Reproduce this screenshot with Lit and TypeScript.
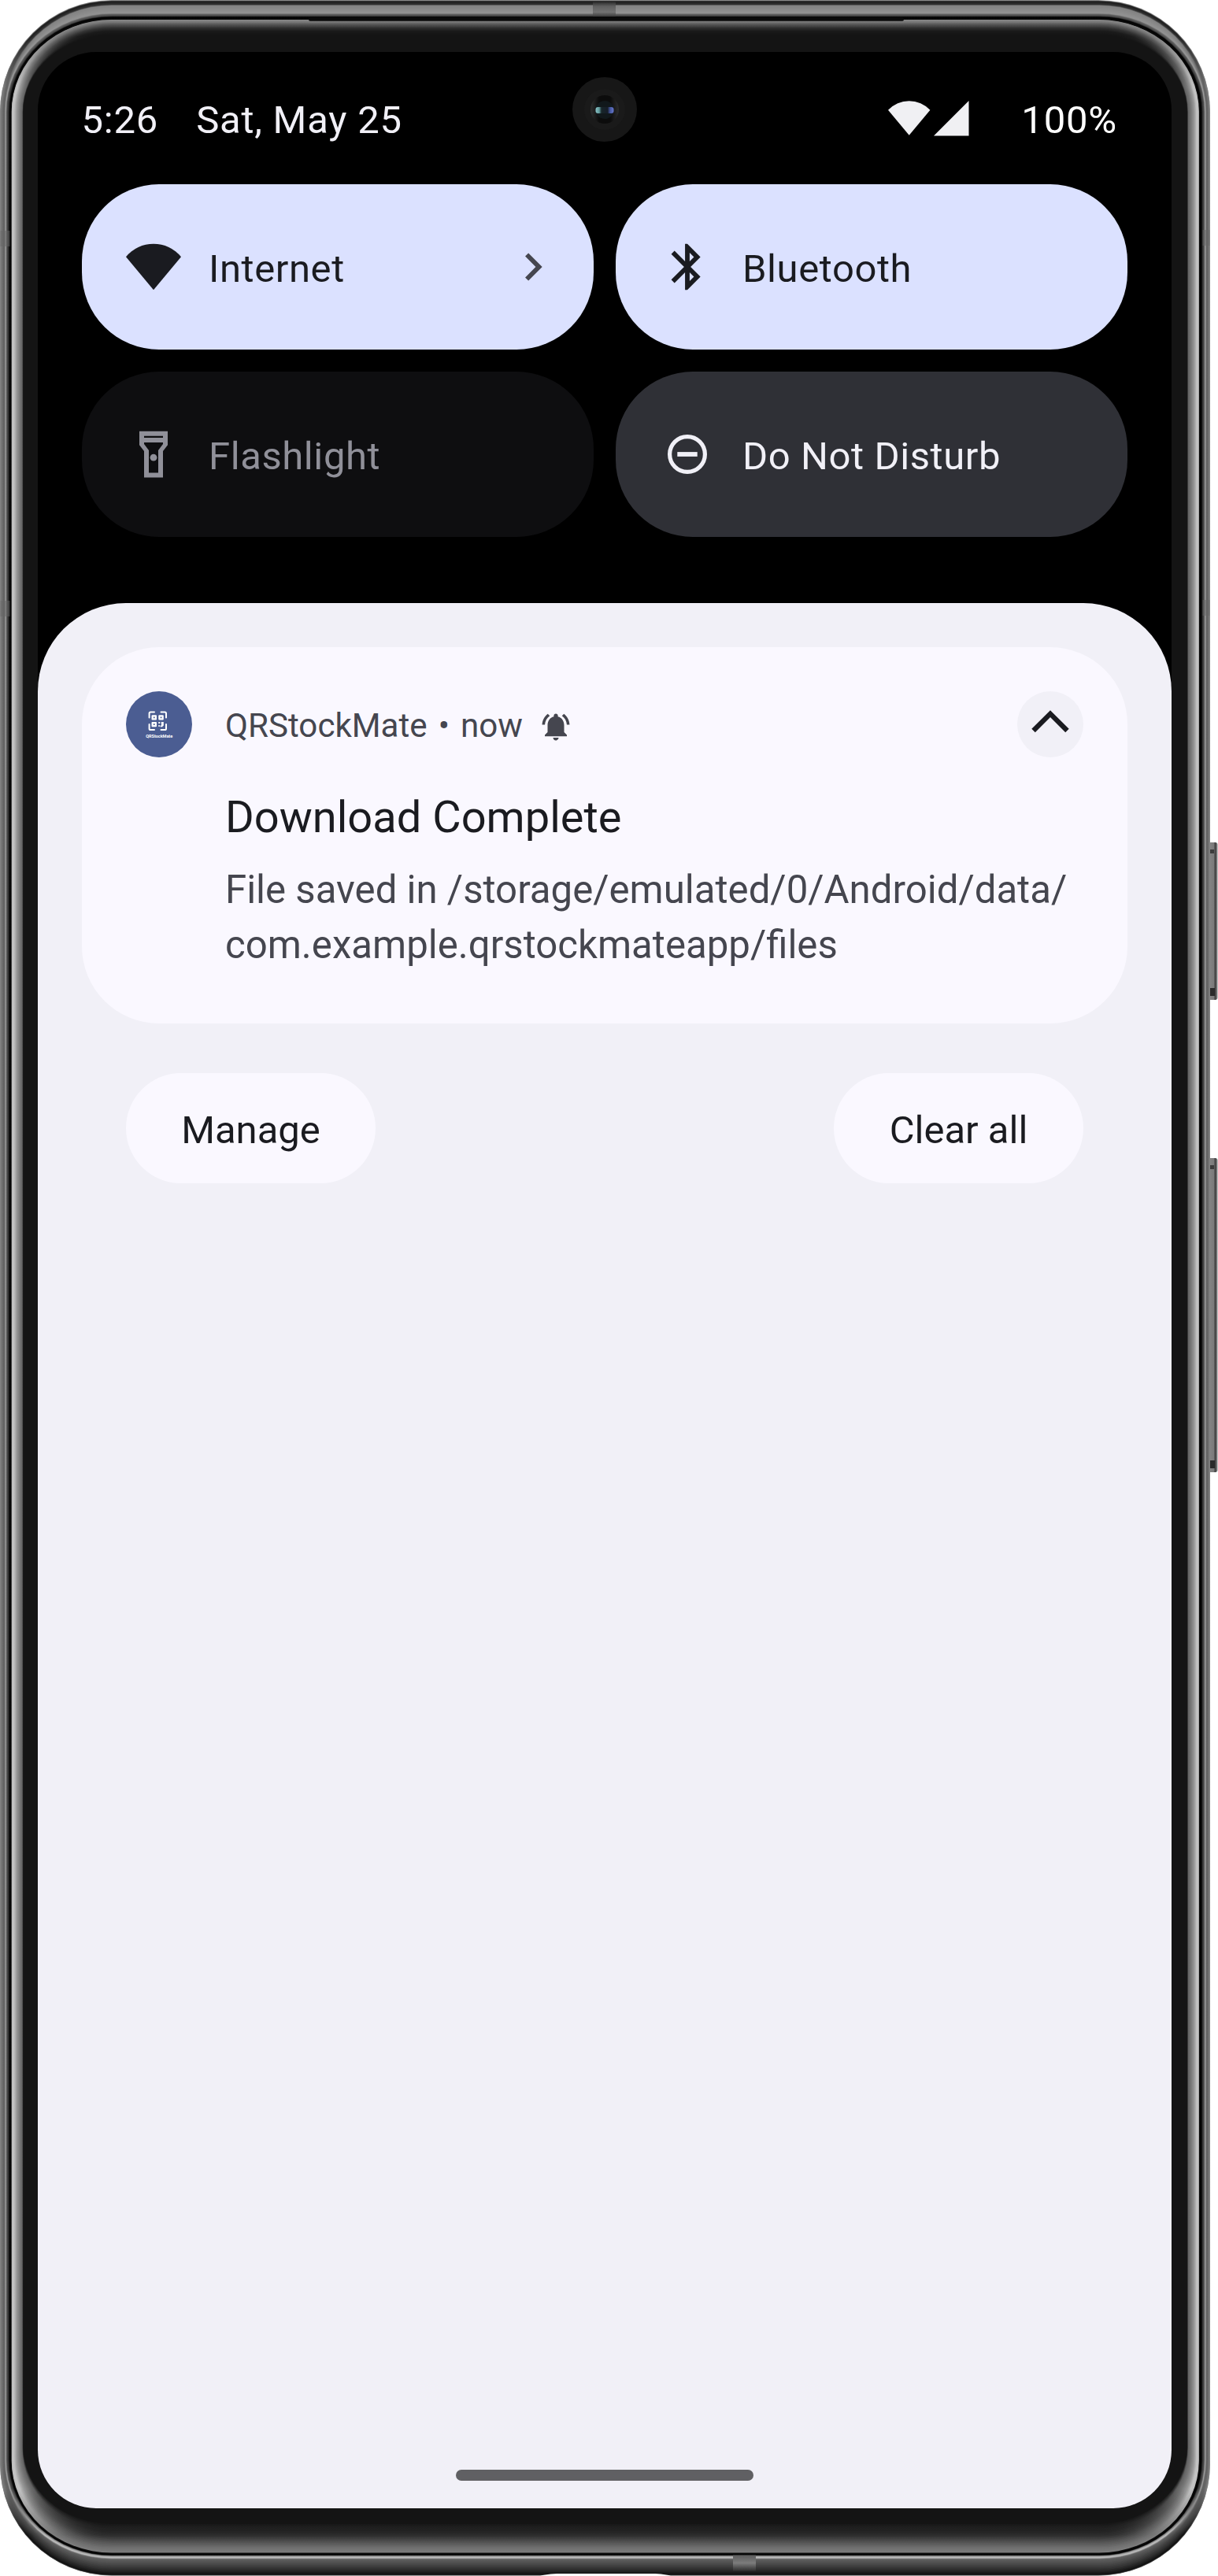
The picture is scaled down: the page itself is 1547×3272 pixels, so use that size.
import { LitElement, html, svg, css } from "lit";
import { customElement, property } from "lit/decorators.js";

type RGB = [number, number, number];
interface Ring {
  left: number;
  top: number;
  right: number;
  bottom: number;
  side: number;
  head: number;
  foot: number;
}

const BODY_W = 1537;
const BODY_H = 3272;
const BODY_R = 142;

/* Metal band: insets from each edge, then grey levels for sides, top and bottom. */
const METAL: number[][] = [
  [0, 0, 0, 0.5, 136, 168, 110],
  [1, 1.5, 1, 1.5, 122, 28, 17],
  [4, 5.5, 3, 8, 100, 52, 48],
  [5.5, 7, 4.5, 14, 98, 132, 72],
  [7, 16.5, 6, 21, 165, 148, 98],
  [8.5, 18, 7.5, 23, 80, 96, 196],
  [10.5, 20, 9.5, 25.5, 50, 72, 130],
  [12.2, 21.5, 11, 26.5, 2, 2, 2],
  [14.2, 24.3, 13.6, 28.8, 8, 10, 12],
];

/* Curved glass edge, fading into the black bezel. */
const GLASS: number[][] = [
  [14.7, 25, 14.2, 29.5, 190, 136, 124],
  [17, 27.5, 16.5, 35, 196, 120, 112],
  [21, 31, 20, 42, 150, 84, 84],
  [25, 35, 24, 50, 118, 48, 48],
  [28.4, 39, 28, 57, 96, 26, 27],
  [29.3, 44, 29, 66, 20, 20, 20],
];

const toRing = (a: number[]): Ring => ({
  left: a[0], top: a[1], right: a[2], bottom: a[3], side: a[4], head: a[5], foot: a[6],
});

function expand(keys: number[][], steps: number): Ring[] {
  const out: Ring[] = [];
  for (let i = 0; i < keys.length - 1; i++) {
    for (let s = 0; s < steps; s++) {
      const t = s / steps;
      out.push(toRing(keys[i].map((v, k) => v + (keys[i + 1][k] - v) * t)));
    }
  }
  out.push(toRing(keys[keys.length - 1]));
  return out;
}

const grey = (v: number) => {
  const n = Math.round(v);
  const c: RGB = [n, n, n];
  return `rgb(${c.join(",")})`;
};

@customElement("phone-body")
export class PhoneBody extends LitElement {
  static styles = css`
    :host { display: block; }
    svg { display: block; }
  `;

  private ring(r: Ring, i: number) {
    const w = BODY_W - r.left - r.right;
    const h = BODY_H - r.top - r.bottom;
    const id = `ring${i}`;
    return svg`
      <linearGradient id=${id} gradientUnits="userSpaceOnUse" x1="0" y1="0" x2="0" y2=${BODY_H}>
        <stop offset="0.014" stop-color=${grey(r.head)}></stop>
        <stop offset="0.034" stop-color=${grey(r.side)}></stop>
        <stop offset="0.966" stop-color=${grey(r.side)}></stop>
        <stop offset="0.984" stop-color=${grey(r.foot)}></stop>
      </linearGradient>
      <rect x=${r.left} y=${r.top} width=${w} height=${h}
        rx=${BODY_R - r.left} ry=${BODY_R - Math.min(r.top, 50)} fill="url(#${id})"></rect>`;
  }

  render() {
    const metal = expand(METAL, 4);
    const glass = expand(GLASS, 5);
    return html`
      <svg width="1547" height="3272" viewBox="0 0 1547 3272" aria-hidden="true">
        <defs>
          <linearGradient id="key" x1="0" x2="1" y1="0" y2="0">
            <stop offset="0" stop-color="#3c3c3c"></stop>
            <stop offset="0.35" stop-color="#828282"></stop>
            <stop offset="0.68" stop-color="#7a7a7a"></stop>
            <stop offset="0.78" stop-color="#3a3a3a"></stop>
            <stop offset="1" stop-color="#8e8e8e"></stop>
          </linearGradient>
          <linearGradient id="bandTop" x1="0" x2="0" y1="0" y2="1">
            <stop offset="0" stop-color="#2c2c2c"></stop>
            <stop offset="0.3" stop-color="#606060"></stop>
            <stop offset="0.7" stop-color="#727272"></stop>
            <stop offset="1" stop-color="#3a3a3a"></stop>
          </linearGradient>
          <linearGradient id="bandFoot" x1="0" x2="0" y1="0" y2="1">
            <stop offset="0" stop-color="#5c5c5c"></stop>
            <stop offset="0.5" stop-color="#7c7c7c"></stop>
            <stop offset="1" stop-color="#303030"></stop>
          </linearGradient>
        </defs>
        ${[[1070, 200], [1471, 399]].map(
          ([y, h]) => svg`
            <rect x="1532" y=${y} width="14.5" height=${h} rx="3" fill="url(#key)"></rect>
            <rect x="1536" y=${y + 9} width="6" height="5" fill="#3c3c3c"></rect>
            <rect x="1535" y=${y + h - 15} width="8" height="10" fill="#2a2a2a"></rect>`
        )}
        ${metal.map((r, i) => this.ring(r, i))}
        ${glass.map((r, i) => this.ring(r, 100 + i))}
        <rect x="392" y="22.5" width="756" height="4.3" rx="2" fill="#0b0b0b"></rect>
        <rect x="753" y="2.5" width="29" height="18.5" fill="url(#bandTop)"></rect>
        <rect x="931" y="3245.5" width="29" height="20" fill="url(#bandFoot)"></rect>
        ${[293, 763].map(
          (y) => svg`
            <rect x="0.5" y=${y} width="12" height="20" fill="#666" opacity="0.5"></rect>
            <rect x="1527.5" y=${y - 1} width="9" height="20" fill="#666" opacity="0.5"></rect>`
        )}
        <path d="M686 3272C694 3269.4 704 3269 716 3269H824C836 3269 844 3269.4 852 3272Z" fill="#fff"></path>
      </svg>
    `;
  }
}

@customElement("front-camera")
export class FrontCamera extends LitElement {
  static styles = css`
    :host { display: block; }
    svg { display: block; }
  `;
  render() {
    return html`
      <svg width="82" height="82" viewBox="0 0 82 82" aria-hidden="true">
        <defs>
          <linearGradient id="rim" x1="0" x2="1" y1="0" y2="0">
            <stop offset="0" stop-color="#2e2e2e"></stop>
            <stop offset="0.3" stop-color="#0c0c0c"></stop>
            <stop offset="0.7" stop-color="#0c0c0c"></stop>
            <stop offset="1" stop-color="#2c2c2c"></stop>
          </linearGradient>
          <linearGradient id="lens" x1="0" x2="1" y1="0" y2="0">
            <stop offset="0" stop-color="#8cc3c6"></stop>
            <stop offset="0.2" stop-color="#5f9a9c"></stop>
            <stop offset="0.32" stop-color="#18262a"></stop>
            <stop offset="0.66" stop-color="#161d28"></stop>
            <stop offset="0.8" stop-color="#4456a0"></stop>
            <stop offset="1" stop-color="#6878cc"></stop>
          </linearGradient>
        </defs>
        <circle cx="41" cy="41" r="41" fill="#171717"></circle>
        <circle cx="41" cy="41" r="26" fill="#1a1a1a"></circle>
        <circle cx="41" cy="41" r="18" fill="url(#rim)"></circle>
        <circle cx="41" cy="41.5" r="11.5" fill="#11181b"></circle>
        <rect x="29.5" y="38" width="23" height="8" rx="3" fill="url(#lens)"></rect>
      </svg>
    `;
  }
}

const ICONS = {
  wifi: svg`<path d="M35 64.2L0 22.2A45.5 45.5 0 0 1 70 22.2Z"></path>`,
  bluetooth: svg`<path transform="scale(2.9167)" d="M17.71 7.71L12 2h-1v7.59L6.41 5 5 6.41 10.59 12 5 17.59 6.41 19 11 14.41V22h1l5.71-5.71-4.3-4.29 4.3-4.29zM13 5.83l1.88 1.88L13 9.59V5.83zm1.88 10.46L13 18.17v-3.76l1.88 1.88z"></path>`,
  flashlight: svg`<path fill-rule="evenodd" d="M17 5.8H53V23.3L47 31V64.5H23V31L17 23.3ZM23 11.7V14.1H47V11.7ZM23 20V21.9L29 30V58.5H41V30L47 21.9V20Z"></path><circle cx="35" cy="39.2" r="4.4"></circle>`,
  dnd: svg`<circle cx="35" cy="35" r="22.4" fill="none" stroke="currentColor" stroke-width="5.2"></circle><rect x="22.3" y="32.1" width="25.4" height="5.8"></rect>`,
};

@customElement("quick-tile")
export class QuickTile extends LitElement {
  @property() label = "";
  @property() icon: keyof typeof ICONS = "wifi";
  @property() state = "active";
  @property({ type: Boolean }) chevron = false;

  static styles = css`
    :host { display: block; }
    .tile {
      box-sizing: border-box;
      height: 210px;
      border-radius: 98px;
      padding: 0 42px 0 56px;
      display: flex;
      align-items: center;
      font-size: 49px;
      letter-spacing: 0.012em;
    }
    .active { background: #dbe1ff; color: #1a1b20; }
    .inactive { background: #2f3036; color: #f1f0f7; }
    .disabled { background: #0e0e10; color: #909099; }
    .icon { width: 70px; height: 70px; fill: currentColor; flex: none; }
    .label { flex: 1; padding: 5px 0 0 35px; line-height: 58px; white-space: nowrap; }
    .chevron { width: 70px; height: 70px; fill: #45464f; flex: none; }
  `;

  render() {
    return html`
      <div class="tile ${this.state}">
        <svg class="icon" viewBox="0 0 70 70">${ICONS[this.icon]}</svg>
        <span class="label">${this.label}</span>
        ${this.chevron
          ? html`<svg class="chevron" viewBox="0 0 24 24"><path d="M10 6L8.59 7.41 13.17 12l-4.58 4.59L10 18l6-6z"></path></svg>`
          : null}
      </div>
    `;
  }
}

@customElement("notification-card")
export class NotificationCard extends LitElement {
  static styles = css`
    :host { display: block; }
    .card {
      box-sizing: border-box;
      height: 478px;
      border-radius: 98px;
      background: #faf8ff;
      padding: 56px;
      display: grid;
      grid-template-columns: 84px 1fr;
      column-gap: 42px;
      align-content: start;
    }
    .app-icon, .expand { width: 84px; height: 84px; display: block; }
    .head { display: flex; align-items: center; height: 84px; color: #45464f; font-size: 42.15px; }
    .meta { padding-top: 3px; line-height: 50px; white-space: nowrap; }
    .dot { padding: 0 14px; }
    .bell { width: 42px; height: 42px; margin: 5px 0 0 21.5px; fill: #45464f; }
    .expand { margin-left: auto; }
    .copy { grid-column: 2; }
    .title { margin-top: 43px; font-size: 56px; line-height: 66px; color: #1a1b20; }
    .text { margin-top: 24px; font-size: 49.16px; line-height: 70px; color: #45464f; white-space: nowrap; }
    .brand { font: 700 5.6px Roboto, sans-serif; }
  `;

  render() {
    return html`
      <article class="card">
        <svg class="app-icon" viewBox="0 0 84 84">
          <circle cx="42" cy="42" r="42" fill="#4b5d92"></circle>
          <g fill="none" stroke="#fff" stroke-width="2" stroke-linecap="round">
            <path d="M29.6 33.6V28.2Q29.6 26.6 31.2 26.6H36"></path>
            <path d="M44.5 26.6H49.4Q51 26.6 51 28.2V33.6"></path>
            <path d="M29.6 42V47.4Q29.6 49 31.2 49H36"></path>
            <path d="M44.5 49H49.4Q51 49 51 47.4V42"></path>
          </g>
          <g fill="#fff">
            <path fill-rule="evenodd" d="M33.5 30.2H38Q39 30.2 39 31.2V35.4Q39 36.4 38 36.4H33.5Q32.5 36.4 32.5 35.4V31.2Q32.5 30.2 33.5 30.2ZM34.9 32.5V34.2H36.6V32.5Z"></path>
            <path fill-rule="evenodd" d="M42.3 30.2H46.8Q47.8 30.2 47.8 31.2V35.4Q47.8 36.4 46.8 36.4H42.3Q41.3 36.4 41.3 35.4V31.2Q41.3 30.2 42.3 30.2ZM43.7 32.5V34.2H45.4V32.5Z"></path>
            <path fill-rule="evenodd" d="M33.5 39H38Q39 39 39 40V44.2Q39 45.2 38 45.2H33.5Q32.5 45.2 32.5 44.2V40Q32.5 39 33.5 39ZM34.9 41.3V43H36.6V41.3Z"></path>
            <path d="M41.3 39H43.3V41H41.3ZM44.8 39H47.8V43.4L46 45.2H43.6V43.4H45V41.2H44.8ZM41.3 43H42.8V45H41.3Z"></path>
            <text class="brand" x="42.2" y="59.3" text-anchor="middle" textLength="34">QRStockMate</text>
          </g>
        </svg>
        <header class="head">
          <span class="meta">QRStockMate<span class="dot">•</span>now</span>
          <svg class="bell" viewBox="0 0 24 24"><path d="M7.58 4.08L6.15 2.65C3.75 4.48 2.17 7.3 2.03 10.5h2c.15-2.65 1.51-4.97 3.55-6.42zm12.39 6.42h2c-.15-3.2-1.73-6.02-4.12-7.85l-1.42 1.43c2.02 1.45 3.39 3.77 3.54 6.42zM18 11c0-3.07-1.64-5.64-4.5-6.32V4c0-.83-.67-1.5-1.5-1.5s-1.5.67-1.5 1.5v.68C7.63 5.36 6 7.92 6 11v5l-2 2v1h16v-1l-2-2v-5zm-6 11c.14 0 .27-.01.4-.04.65-.14 1.18-.58 1.44-1.18.1-.24.15-.5.15-.78h-4c.01 1.1.9 2 2.01 2z"></path></svg>
          <svg class="expand" viewBox="0 0 84 84">
            <circle cx="42" cy="42" r="42" fill="#f1f0f7"></circle>
            <path d="M42 24.3L18.3 47.7L22.8 52.2L42 33L61.2 52.2L65.7 47.7Z" fill="#1a1b20"></path>
          </svg>
        </header>
        <div class="copy">
          <div class="title">Download Complete</div>
          <div class="text">File saved in /storage/emulated/0/Android/data/<br />com.example.qrstockmateapp/files</div>
        </div>
      </article>
    `;
  }
}

@customElement("app-root")
export class AppRoot extends LitElement {
  static styles = css`
    :host {
      display: block;
      width: 1547px;
      height: 3272px;
      background: #fff;
      font-family: Roboto, "Noto Sans", sans-serif;
    }
    .device {
      position: relative;
      box-sizing: border-box;
      width: 1547px;
      height: 3272px;
      padding: 66px 59px 86px 48px;
      overflow: hidden;
    }
    .body { position: absolute; inset: 0; }
    .camera { position: absolute; left: 727px; top: 98px; }
    .screen {
      position: relative;
      height: 3120px;
      border-radius: 74px;
      background: #000;
      overflow: hidden;
      display: flex;
      flex-direction: column;
    }
    .status {
      box-sizing: border-box;
      height: 168px;
      padding: 0 69px 0 55.5px;
      display: flex;
      align-items: center;
      font-size: 49px;
      line-height: 58px;
      letter-spacing: 0.016em;
      color: #f1f0f7;
    }
    .status span { padding-top: 5px; }
    .date { margin-left: 48px; }
    .signals { margin-left: auto; width: 104px; height: 46px; fill: #f0f0f3; }
    .battery { margin-left: 66.5px; color: #fff; }
    .tiles {
      display: grid;
      grid-template-columns: 650px 650px;
      gap: 28px;
      padding: 0 56px;
    }
    .shade {
      box-sizing: border-box;
      margin-top: 84px;
      flex: 1;
      border-radius: 112px 112px 0 0;
      background: #f1f0f7;
      padding: 56px 56px 35px;
      display: flex;
      flex-direction: column;
    }
    .actions { display: flex; justify-content: space-between; margin: 63px 56px 0; }
    .pill {
      box-sizing: border-box;
      width: 317px;
      height: 140px;
      border: 0;
      border-radius: 70px;
      background: #faf8ff;
      color: #1a1b20;
      font: 400 49px / 58px Roboto, "Noto Sans", sans-serif;
      padding: 5px 0 0;
      text-align: center;
    }
    .handle {
      align-self: center;
      margin-top: auto;
      width: 378px;
      height: 14px;
      border-radius: 7px;
      background: #606063;
    }
  `;

  render() {
    return html`
      <div class="device">
        <phone-body class="body"></phone-body>
        <main class="screen">
          <div class="status">
            <span class="time">5:26</span>
            <span class="date">Sat, May 25</span>
            <svg class="signals" viewBox="0 0 104 46">
              <path d="M27.7 44.7L1 12.8A36.5 36.5 0 0 1 54.4 12.8Z"></path>
              <path d="M59 45.4L103.5 1V45.4Z"></path>
            </svg>
            <span class="battery">100%</span>
          </div>
          <section class="tiles">
            <quick-tile label="Internet" icon="wifi" state="active" chevron></quick-tile>
            <quick-tile label="Bluetooth" icon="bluetooth" state="active"></quick-tile>
            <quick-tile label="Flashlight" icon="flashlight" state="disabled"></quick-tile>
            <quick-tile label="Do Not Disturb" icon="dnd" state="inactive"></quick-tile>
          </section>
          <section class="shade">
            <notification-card></notification-card>
            <div class="actions">
              <button class="pill">Manage</button>
              <button class="pill">Clear all</button>
            </div>
            <div class="handle"></div>
          </section>
        </main>
        <front-camera class="camera"></front-camera>
      </div>
    `;
  }
}
